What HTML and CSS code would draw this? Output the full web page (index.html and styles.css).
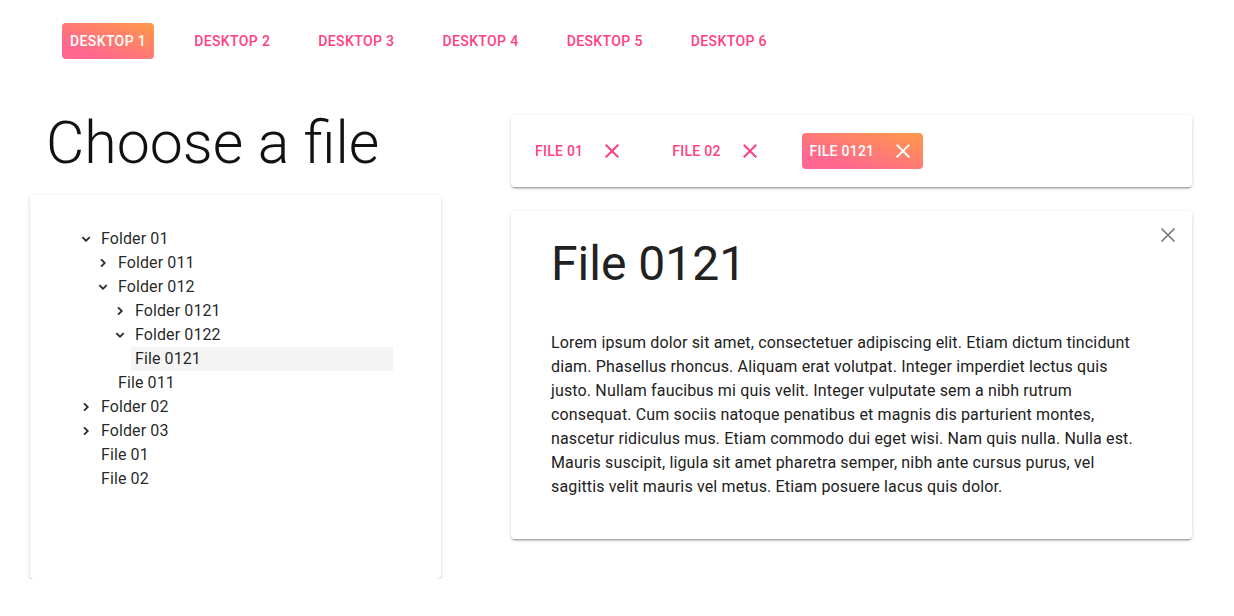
FILE: index.html
```html
<!DOCTYPE html>
<html lang="en">
<head>
<meta charset="utf-8">
<title>Choose a file</title>
<link rel="stylesheet" href="styles.css">
</head>
<body>
<nav class="desktops">
  <button class="btn active">Desktop 1</button>
  <button class="btn">Desktop 2</button>
  <button class="btn">Desktop 3</button>
  <button class="btn">Desktop 4</button>
  <button class="btn">Desktop 5</button>
  <button class="btn">Desktop 6</button>
</nav>
<main class="main">
  <section class="left">
    <h1 class="page-title">Choose a file</h1>
    <div class="card tree-card">
      <ul class="tree">
        <li>
          <div class="row"><svg class="toggle" viewBox="0 0 24 24"><path d="M16.59 8.59L12 13.17 7.41 8.59 6 10l6 6 6-6z"/></svg><span class="label">Folder 01</span></div>
          <ul class="children">
            <li><div class="row"><svg class="toggle" viewBox="0 0 24 24"><path d="M10 6L8.59 7.41 13.17 12l-4.58 4.59L10 18l6-6z"/></svg><span class="label">Folder 011</span></div></li>
            <li>
              <div class="row"><svg class="toggle" viewBox="0 0 24 24"><path d="M16.59 8.59L12 13.17 7.41 8.59 6 10l6 6 6-6z"/></svg><span class="label">Folder 012</span></div>
              <ul class="children">
                <li><div class="row"><svg class="toggle" viewBox="0 0 24 24"><path d="M10 6L8.59 7.41 13.17 12l-4.58 4.59L10 18l6-6z"/></svg><span class="label">Folder 0121</span></div></li>
                <li><div class="row"><svg class="toggle" viewBox="0 0 24 24"><path d="M16.59 8.59L12 13.17 7.41 8.59 6 10l6 6 6-6z"/></svg><span class="label">Folder 0122</span></div></li>
                <li><div class="row leaf"><span class="label selected">File 0121</span></div></li>
              </ul>
            </li>
            <li><div class="row leaf"><span class="label">File 011</span></div></li>
          </ul>
        </li>
        <li><div class="row"><svg class="toggle" viewBox="0 0 24 24"><path d="M10 6L8.59 7.41 13.17 12l-4.58 4.59L10 18l6-6z"/></svg><span class="label">Folder 02</span></div></li>
        <li><div class="row"><svg class="toggle" viewBox="0 0 24 24"><path d="M10 6L8.59 7.41 13.17 12l-4.58 4.59L10 18l6-6z"/></svg><span class="label">Folder 03</span></div></li>
        <li><div class="row leaf"><span class="label">File 01</span></div></li>
        <li><div class="row leaf"><span class="label">File 02</span></div></li>
      </ul>
    </div>
  </section>
  <section class="right">
    <div class="card tabs-card">
      <div class="tab"><span>File 01</span><svg class="tab-close" viewBox="0 0 24 24"><path d="M19 6.41L17.59 5 12 10.59 6.41 5 5 6.41 10.59 12 5 17.59 6.41 19 12 13.41 17.59 19 19 17.59 13.41 12z"/></svg></div>
      <div class="tab"><span>File 02</span><svg class="tab-close" viewBox="0 0 24 24"><path d="M19 6.41L17.59 5 12 10.59 6.41 5 5 6.41 10.59 12 5 17.59 6.41 19 12 13.41 17.59 19 19 17.59 13.41 12z"/></svg></div>
      <div class="tab active"><span>File 0121</span><svg class="tab-close" viewBox="0 0 24 24"><path d="M19 6.41L17.59 5 12 10.59 6.41 5 5 6.41 10.59 12 5 17.59 6.41 19 12 13.41 17.59 19 19 17.59 13.41 12z"/></svg></div>
    </div>
    <article class="card file-card">
      <svg class="file-close" viewBox="0 0 24 24"><path d="M5.5 5.5L18.5 18.5M18.5 5.5L5.5 18.5"/></svg>
      <h2 class="file-title">File 0121</h2>
      <p class="file-text">Lorem ipsum dolor sit amet, consectetuer adipiscing elit. Etiam dictum tincidunt diam. Phasellus rhoncus. Aliquam erat volutpat. Integer imperdiet lectus quis justo. Nullam faucibus mi quis velit. Integer vulputate sem a nibh rutrum consequat. Cum sociis natoque penatibus et magnis dis parturient montes, nascetur ridiculus mus. Etiam commodo dui eget wisi. Nam quis nulla. Nulla est. Mauris suscipit, ligula sit amet pharetra semper, nibh ante cursus purus, vel sagittis velit mauris vel metus. Etiam posuere lacus quis dolor.</p>
    </article>
  </section>
</main>
</body>
</html>
```
FILE: styles.css
```css
* { box-sizing: border-box; }
html, body {
  margin: 0;
  background: #fff;
  font-family: Roboto, "Liberation Sans", sans-serif;
  color: rgba(0, 0, 0, 0.87);
}

.desktops {
  display: flex;
  gap: 32px;
  padding: 23px 0 0 62px;
}
.btn {
  height: 36px;
  padding: 0 8px;
  border: 0;
  border-radius: 4px;
  background: transparent;
  font-family: Roboto, "Liberation Sans", sans-serif;
  font-size: 14px;
  font-weight: 500;
  letter-spacing: 0.38px;
  text-transform: uppercase;
  color: #ff4081;
  line-height: 36px;
}
.btn.active, .tab.active {
  color: #fff;
  background: linear-gradient(to top right, #ff6690 20%, #ff9a48);
}

.main {
  display: grid;
  grid-template-columns: 411px 1fr;
  column-gap: 70px;
  padding: 56px 42px 0 30px;
}

.card {
  background: #fff;
  border-radius: 4px;
  box-shadow: 0 3px 1px -2px rgba(0,0,0,.2), 0 2px 2px 0 rgba(0,0,0,.14), 0 1px 5px 0 rgba(0,0,0,.12);
}

.page-title {
  margin: 0 0 24px;
  padding-left: 16px;
  font-size: 59px;
  font-weight: 300;
  line-height: 56px;
  color: #111;
}

.tree-card {
  height: 384px;
  padding: 32px 48px 0;
}
.tree, .children {
  list-style: none;
  margin: 0;
  padding: 0;
}
.children { padding-left: 17px; }
.row {
  display: flex;
  align-items: center;
  height: 24px;
  font-size: 16px;
  letter-spacing: 0.1px;
}
.row.leaf { padding-left: 19px; }
.toggle {
  width: 16px;
  height: 16px;
  margin-right: 3px;
  fill: #222;
  stroke: #222;
  stroke-width: 0.8;
  flex: none;
}
.label {
  padding: 0 4px;
  height: 24px;
  line-height: 24px;
}
.label.selected {
  flex: 1;
  background: #f4f4f4;
}

.right {
  display: flex;
  flex-direction: column;
  gap: 24px;
}
.tabs-card {
  display: flex;
  gap: 32px;
  padding: 18px 16px;
}
.tab {
  display: flex;
  align-items: center;
  height: 36px;
  padding: 0 8px;
  border-radius: 4px;
  font-size: 14px;
  font-weight: 500;
  letter-spacing: 0.25px;
  text-transform: uppercase;
  color: #ff4081;
}
.tab-close {
  width: 24px;
  height: 24px;
  margin-left: 17px;
  fill: currentColor;
}

.file-card {
  position: relative;
  padding: 25px 40px 40px;
}
.file-close {
  position: absolute;
  top: 12px;
  right: 12px;
  width: 24px;
  height: 24px;
  fill: none;
  stroke: #757575;
  stroke-width: 1.6;
}
.file-title {
  margin: 0 0 39px;
  font-size: 48px;
  font-weight: 400;
  line-height: 56px;
  color: #212121;
}
.file-text {
  margin: 0;
  font-size: 16px;
  line-height: 24px;
  letter-spacing: 0.15px;
  color: #212121;
}
```
